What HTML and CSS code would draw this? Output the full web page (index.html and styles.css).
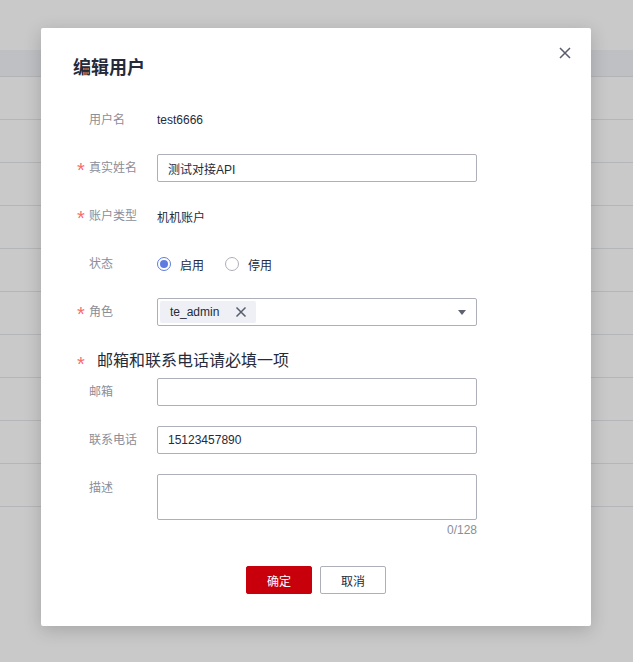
FILE: index.html
```html
<!DOCTYPE html>
<html lang="zh-CN">
<head>
  <meta charset="UTF-8" />
  <meta name="viewport" content="width=device-width, initial-scale=1" />
  <title>编辑用户</title>
  <link rel="stylesheet" href="styles.css">
</head>
<body>

<div class="backdrop-table">
  <div class="backdrop-head"></div>
  <div class="backdrop-row"></div>
  <div class="backdrop-row"></div>
  <div class="backdrop-row"></div>
  <div class="backdrop-row"></div>
  <div class="backdrop-row"></div>
  <div class="backdrop-row"></div>
  <div class="backdrop-row"></div>
  <div class="backdrop-row"></div>
  <div class="backdrop-row"></div>
  <div class="backdrop-row"></div>
</div>

<div class="modal">
  <button class="modal-close" type="button" aria-label="关闭">
    <svg width="12" height="12" viewBox="0 0 12 12"><path d="M1 1L11 11M11 1L1 11" /></svg>
  </button>

  <h2 class="modal-title">编辑用户</h2>

  <form class="user-form">
    <div class="form-row">
      <label class="form-label"><span class="req"></span>用户名</label>
      <div class="form-value">test6666</div>
    </div>

    <div class="form-row">
      <label class="form-label"><span class="req">*</span>真实姓名</label>
      <input class="text-input" type="text" value="测试对接API" />
    </div>

    <div class="form-row">
      <label class="form-label"><span class="req">*</span>账户类型</label>
      <div class="form-value">机机账户</div>
    </div>

    <div class="form-row">
      <label class="form-label"><span class="req"></span>状态</label>
      <div class="radio-group">
        <span class="radio checked"></span><span class="radio-text">启用</span>
        <span class="radio"></span><span class="radio-text">停用</span>
      </div>
    </div>

    <div class="form-row">
      <label class="form-label"><span class="req">*</span>角色</label>
      <div class="select-box">
        <span class="tag">te_admin
          <svg width="12" height="12" viewBox="0 0 12 12"><path d="M1.5 1.5L10.5 10.5M10.5 1.5L1.5 10.5" /></svg>
        </span>
        <span class="caret"></span>
      </div>
    </div>

    <div class="section-title"><span class="req">*</span>邮箱和联系电话请必填一项</div>

    <div class="form-row tight">
      <label class="form-label"><span class="req"></span>邮箱</label>
      <input class="text-input" type="text" value="" />
    </div>

    <div class="form-row">
      <label class="form-label"><span class="req"></span>联系电话</label>
      <input class="text-input" type="text" value="15123457890" />
    </div>

    <div class="form-row top">
      <label class="form-label"><span class="req"></span>描述</label>
      <div class="textarea-wrap">
        <textarea class="text-area"></textarea>
        <div class="counter">0/128</div>
      </div>
    </div>

    <div class="actions">
      <button class="btn btn-primary" type="button">确定</button>
      <button class="btn" type="button">取消</button>
    </div>
  </form>
</div>

</body>
</html>
```

FILE: styles.css
```css
body {
  margin: 0;
  background: #c9c9c9;
  font-family: 'Liberation Sans', 'Noto Sans CJK SC', sans-serif;
  color: #252b3a;
  font-size: 12px;
  height: 662px;
  overflow: hidden;
}
.backdrop-table {
  padding-top: 50px;
}
.backdrop-head {
  height: 26px;
  background: #bfc0c4;
  border-bottom: 1px solid #b3b4b8;
}
.backdrop-row {
  height: 42px;
  border-bottom: 1px solid #b5b6b9;
}
.modal {
  position: absolute;
  left: 41px;
  top: 28px;
  width: 550px;
  height: 598px;
  box-sizing: border-box;
  background: #fff;
  border-radius: 2px;
  box-shadow: 0 4px 18px rgba(0, 0, 0, 0.18);
  padding: 28px 32px 0;
}
.modal-close {
  position: absolute;
  right: 20px;
  top: 19px;
  width: 12px;
  height: 12px;
  padding: 0;
  border: none;
  background: none;
  cursor: pointer;
}
.modal-close svg path {
  stroke: #575d6c;
  stroke-width: 1.5;
  fill: none;
}
.modal-title {
  margin: 0;
  font-size: 18px;
  line-height: 24px;
  font-weight: bold;
  color: #252b3a;
}
.user-form {
  margin-top: 26px;
  padding-left: 4px;
}
.form-row {
  display: flex;
  align-items: center;
  min-height: 28px;
  margin-bottom: 20px;
}
.form-row.tight {
  margin-top: 6px;
}
.form-row.top {
  align-items: flex-start;
}
.form-label {
  display: flex;
  align-items: center;
  width: 80px;
  flex-shrink: 0;
  color: #8a8e99;
  line-height: 28px;
}
.req {
  display: inline-block;
  width: 12px;
  height: 20px;
  margin: 2px 0 -2px;
  color: #f66f6a;
  font-size: 20px;
  line-height: 20px;
}
.form-value {
  color: #252b3a;
}
.text-input {
  width: 320px;
  height: 28px;
  box-sizing: border-box;
  border: 1px solid #adb0b8;
  border-radius: 2px;
  padding: 0 10px;
  font: inherit;
  color: #252b3a;
  outline: none;
}
.radio-group {
  display: flex;
  align-items: center;
}
.radio {
  width: 14px;
  height: 14px;
  box-sizing: border-box;
  border: 1px solid #adb0b8;
  border-radius: 50%;
  display: flex;
  align-items: center;
  justify-content: center;
}
.radio.checked {
  border-color: #5e7ce0;
}
.radio.checked::after {
  content: '';
  width: 8px;
  height: 8px;
  border-radius: 50%;
  background: #5e7ce0;
}
.radio-text {
  margin: 0 21px 0 9px;
}
.select-box {
  width: 320px;
  height: 28px;
  box-sizing: border-box;
  border: 1px solid #adb0b8;
  border-radius: 2px;
  display: flex;
  align-items: center;
  justify-content: space-between;
  padding: 0 10px 0 2px;
}
.tag {
  display: flex;
  align-items: center;
  gap: 16px;
  height: 22px;
  background: #eef0f5;
  border-radius: 2px;
  padding: 0 9px 0 10px;
  color: #252b3a;
}
.tag svg path {
  stroke: #575d6c;
  stroke-width: 1.5;
  fill: none;
}
.caret {
  width: 0;
  height: 0;
  border-left: 4px solid transparent;
  border-right: 4px solid transparent;
  border-top: 5px solid #5e6270;
}
.section-title {
  display: flex;
  align-items: center;
  font-size: 16px;
  line-height: 22px;
  height: 22px;
  margin-top: 24px;
  color: #252b3a;
}
.section-title .req {
  width: 20px;
  margin: 3px 0 -3px;
}
.textarea-wrap {
  width: 320px;
}
.text-area {
  display: block;
  width: 320px;
  height: 46px;
  box-sizing: border-box;
  border: 1px solid #adb0b8;
  border-radius: 2px;
  resize: none;
  font: inherit;
  outline: none;
}
.counter {
  text-align: right;
  color: #8a8e99;
  line-height: 20px;
}
.actions {
  display: flex;
  justify-content: center;
  gap: 8px;
  margin-top: 26px;
  margin-left: -4px;
}
.btn {
  width: 66px;
  height: 28px;
  border: 1px solid #adb0b8;
  border-radius: 2px;
  background: #fff;
  color: #252b3a;
  font: inherit;
  cursor: pointer;
}
.btn-primary {
  background: #c7000b;
  border-color: #c7000b;
  color: #fff;
}
```
